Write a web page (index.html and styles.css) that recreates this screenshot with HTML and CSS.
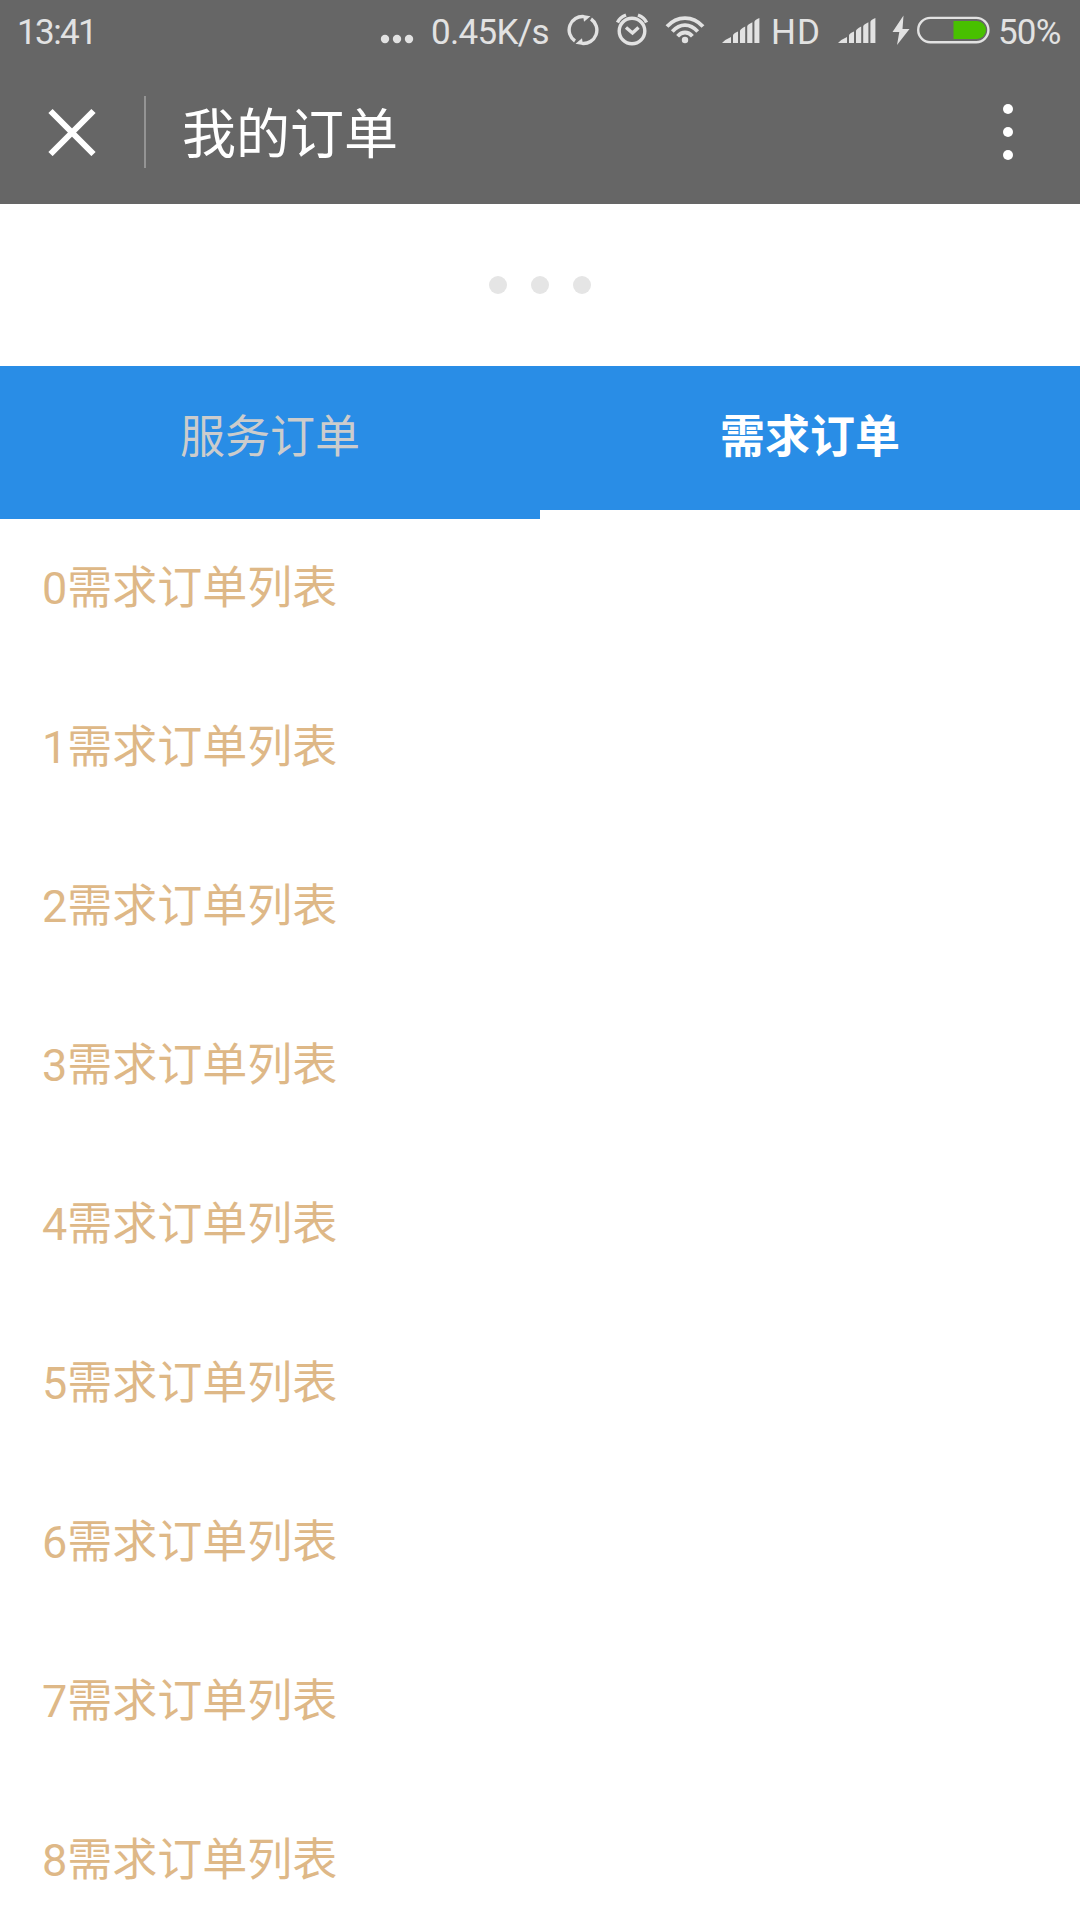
FILE: index.html
```html
<!DOCTYPE html>
<html lang="zh-CN">
<head>
<meta charset="utf-8">
<title>我的订单</title>
<link rel="stylesheet" href="styles.css">
</head>
<body>
<div class="status-bar">
  <span class="time">13:41</span>
  <svg class="more" width="36" height="60" viewBox="379 0 36 60"><circle cx="385" cy="39" r="4.2"/><circle cx="397" cy="39" r="4.2"/><circle cx="409" cy="39" r="4.2"/></svg>
  <span class="speed">0.45K/s</span>
  <svg class="sync" width="32" height="60" viewBox="567 0 32 60">
    <g class="line"><path d="M575 41A13.4 13.4 0 0 1 584 16.600"/><path d="M591 19A13.4 13.4 0 0 1 582 43.400"/></g>
    <path d="M583 15l7.500 1.200-6.500 5.500z M583 45l-7.500-1.200 6.500-5.500z"/>
  </svg>
  <svg class="alarm" width="34" height="60" viewBox="615 0 34 60">
    <g class="line"><circle cx="632" cy="31" r="12.800"/><path d="M626 27.500l6.500 5.500 6-5.500"/><path d="M617.500 22.500q2-5 8.500-7.500M646.500 22.500q-2-5-8.500-7.500"/></g>
  </svg>
  <svg class="wifi" width="40" height="60" viewBox="665 0 40 60">
    <g class="line"><path d="M667 26.500C677 15.200 693 15.200 703 26.500"/><path d="M672.300 31.500C680 23 690 23 697.700 31.500"/><path d="M677.600 36.300C682 31.200 688 31.200 692.400 36.300"/></g><circle cx="685" cy="40" r="3.200"/>
  </svg>
  <svg class="signal" width="38" height="60" viewBox="0 0 38 60"><path d="M0 43Q3 39.500 9 37v6zM11 43V35.500q0-1.800 5-4V43zM18 43V31q0-1.800 5.200-4.500V43zM25.200 43V26.500q0-1.800 5.200-4.300V43zM32.400 43V22q0-2 5-4V43z"/></svg>
  <span class="hd">HD</span>
  <svg class="signal second" width="38" height="60" viewBox="0 0 38 60"><path d="M0 43Q3 39.500 9 37v6zM11 43V35.500q0-1.800 5-4V43zM18 43V31q0-1.800 5.200-4.500V43zM25.200 43V26.500q0-1.800 5.200-4.300V43zM32.400 43V22q0-2 5-4V43z"/></svg>
  <svg class="bolt" width="18" height="60" viewBox="892 0 18 60"><path d="M903.500 15.500L892.500 32h6.800L897 45l12.500-16h-7z"/></svg>
  <svg class="battery" width="73" height="60" viewBox="916.500 0 73 60"><rect class="shell" x="917.700" y="17.900" width="70.200" height="24.300" rx="12.150"/><path class="charge" d="M953 21h23.500a9 9 0 0 1 0 18H953z"/></svg>
  <span class="percent">50%</span>
</div>
<header class="nav">
  <svg class="close" width="48" height="48" viewBox="0 0 48 48"><path d="M2.500 3l43 43M45.500 3l-43 43"/></svg>
  <span class="divider"></span>
  <h1 class="title">我的订单</h1>
  <span class="menu"><i></i><i></i><i></i></span>
</header>
<div class="loading"><i></i><i></i><i></i></div>
<nav class="tabs">
  <span class="tab">服务订单</span>
  <span class="tab active">需求订单</span>
</nav>
<ul class="orders">
  <li>0需求订单列表</li>
  <li>1需求订单列表</li>
  <li>2需求订单列表</li>
  <li>3需求订单列表</li>
  <li>4需求订单列表</li>
  <li>5需求订单列表</li>
  <li>6需求订单列表</li>
  <li>7需求订单列表</li>
  <li>8需求订单列表</li>
</ul>
</body>
</html>
```

FILE: styles.css
```css
* { box-sizing: border-box; }
body {
  margin: 0;
  height: 1920px;
  overflow: hidden;
  background: #fff;
  font-family: Roboto, "Noto Sans CJK SC", sans-serif;
  font-size: 45px;
}
.status-bar {
  display: flex;
  height: 60px;
  padding-left: 17px;
  background: #666;
  color: #e2e2e2;
  font-size: 35px;
  line-height: 65px;
  white-space: nowrap;
}
.status-bar > * { flex: none; }
.status-bar svg { display: block; fill: #e2e2e2; }
.status-bar .line { fill: none; stroke: #e2e2e2; stroke-width: 3.4; }
.status-bar .wifi .line { stroke-width: 3.8; }
.time { width: 362px; letter-spacing: -1.6px; }
.speed { width: 136px; margin-left: 16px; letter-spacing: -0.7px; }
.alarm { margin-left: 16px; }
.wifi { margin-left: 16px; }
.signal { margin-left: 17px; }
.hd { width: 47px; margin-left: 11px; letter-spacing: 1px; }
.signal.second { margin-left: 20px; }
.bolt { margin-left: 16px; }
.battery { margin-left: 7px; }
.battery .shell { fill: none; stroke: #e2e2e2; stroke-width: 2.4; }
.battery .charge { fill: #48c000; }
.percent { margin-left: 8px; letter-spacing: -0.8px; }

.nav {
  display: flex;
  align-items: center;
  height: 144px;
  padding: 0 67px 0 48px;
  background: #666;
  color: #fff;
}
.close { fill: none; stroke: #fff; stroke-width: 6; }
.divider { width: 2px; height: 72px; margin: 0 36px 0 48px; background: #949494; }
.title { margin: 0; padding-top: 7px; font-size: 54px; font-weight: 400; line-height: 78px; }
.menu { display: flex; flex-direction: column; gap: 13px; margin-left: auto; }
.menu i { width: 10px; height: 10px; border-radius: 50%; background: #fff; }

.loading { display: flex; justify-content: center; align-items: center; gap: 24px; height: 162px; }
.loading i { width: 18px; height: 18px; border-radius: 50%; background: #e5e5e5; }

.tabs { display: flex; height: 153px; background: #298de6; }
.tab {
  flex: 1;
  border-bottom: 9px solid #298de6;
  color: #ccc;
  line-height: 144px;
  text-align: center;
}
.tab.active { border-color: #fff; color: #fff; font-weight: 700; }

.orders { margin: 0; padding: 0 42px; list-style: none; color: #deb887; }
.orders li { height: 159px; line-height: 139px; }
```
